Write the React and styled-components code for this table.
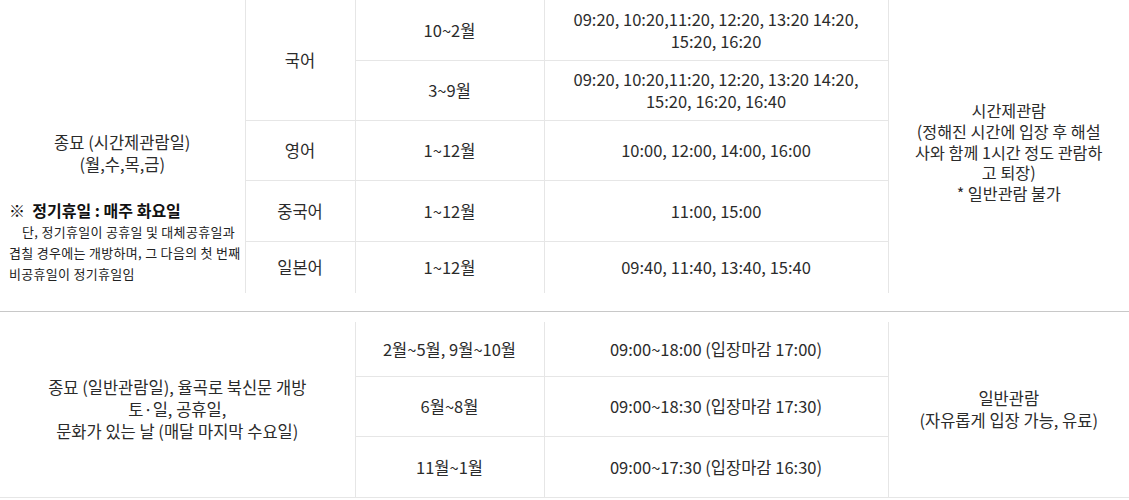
import React from 'react'
import styled, { createGlobalStyle } from 'styled-components'

const LINE = '#e6e6e6'
const TEXT = '#2b2b2b'

const GlobalStyle = createGlobalStyle`
  body {
    margin: 0;
    background: #fff;
    font-family: "Noto Sans CJK KR", "Noto Sans", sans-serif;
    color: ${TEXT};
  }
`

const Page = styled.div`
  width: 1129px;
`

const Table = styled.table`
  width: 100%;
  table-layout: fixed;
  border-collapse: collapse;
  border-style: hidden;
  ${p => p.$bottom && `border-bottom: 1px solid ${LINE};`}
`

const Row = styled.tr`
  height: ${p => p.$h}px;
`

const Cell = styled.td`
  border: 1px solid ${LINE};
  padding: 0 8px;
  text-align: center;
  vertical-align: ${p => p.$align || 'middle'};
  font-size: 16.5px;
  line-height: 22px;
  color: ${TEXT};
  white-space: nowrap;
`

const InfoCell = styled(Cell)`
  padding-top: 11px;
  font-size: 16.2px;
  line-height: 20.8px;
`

const ClosedCell = styled(Cell)`
  padding: 0 9px 9px;
`

const Divider = styled.hr`
  height: 0;
  margin: 18px 0 10px;
  border: 0;
  border-top: 1px solid #c8c8c8;
`

const Note = styled.div`
  margin-top: 24px;
  text-align: left;
`

const NoteTitle = styled.p`
  margin: 0;
  font-size: 16px;
  line-height: 22px;
  font-weight: 700;
  color: #111;
  white-space: pre;
`

const NoteText = styled.p`
  margin: 0;
  font-size: 13px;
  line-height: 21px;
  letter-spacing: 0.3px;
  color: #222;
  text-indent: 13px;
`

export default function App() {
  return (
    <Page>
      <GlobalStyle />
      <Table>
        <colgroup>
          <col style={{ width: 245 }} />
          <col style={{ width: 110 }} />
          <col style={{ width: 189 }} />
          <col style={{ width: 344 }} />
          <col />
        </colgroup>
        <tbody>
          <Row $h={60}>
            <ClosedCell rowSpan={5} $align="bottom">
              종묘 (시간제관람일)<br />
              (월,수,목,금)
              <Note>
                <NoteTitle>{'※  정기휴일 : 매주 화요일'}</NoteTitle>
                <NoteText>
                  단, 정기휴일이 공휴일 및 대체공휴일과<br />
                  겹칠 경우에는 개방하며, 그 다음의 첫 번째<br />
                  비공휴일이 정기휴일임
                </NoteText>
              </Note>
            </ClosedCell>
            <Cell rowSpan={2}>국어</Cell>
            <Cell>10~2월</Cell>
            <Cell>
              09:20, 10:20,11:20, 12:20, 13:20 14:20,<br />
              15:20, 16:20
            </Cell>
            <InfoCell rowSpan={5}>
              시간제관람<br />
              (정해진 시간에 입장 후 해설<br />
              사와 함께 1시간 정도 관람하<br />
              고 퇴장)<br />
              * 일반관람 불가
            </InfoCell>
          </Row>
          <Row $h={60}>
            <Cell>3~9월</Cell>
            <Cell>
              09:20, 10:20,11:20, 12:20, 13:20 14:20,<br />
              15:20, 16:20, 16:40
            </Cell>
          </Row>
          <Row $h={60}>
            <Cell>영어</Cell>
            <Cell>1~12월</Cell>
            <Cell>10:00, 12:00, 14:00, 16:00</Cell>
          </Row>
          <Row $h={61}>
            <Cell>중국어</Cell>
            <Cell>1~12월</Cell>
            <Cell>11:00, 15:00</Cell>
          </Row>
          <Row $h={52}>
            <Cell>일본어</Cell>
            <Cell>1~12월</Cell>
            <Cell>09:40, 11:40, 13:40, 15:40</Cell>
          </Row>
        </tbody>
      </Table>

      <Divider />

      <Table $bottom>
        <colgroup>
          <col style={{ width: 355 }} />
          <col style={{ width: 189 }} />
          <col style={{ width: 344 }} />
          <col />
        </colgroup>
        <tbody>
          <Row $h={54}>
            <Cell rowSpan={3}>
              종묘 (일반관람일), 율곡로 북신문 개방<br />
              토·일, 공휴일,<br />
              문화가 있는 날 (매달 마지막 수요일)
            </Cell>
            <Cell>2월~5월, 9월~10월</Cell>
            <Cell>09:00~18:00 (입장마감 17:00)</Cell>
            <Cell rowSpan={3}>
              일반관람<br />
              (자유롭게 입장 가능, 유료)
            </Cell>
          </Row>
          <Row $h={60}>
            <Cell>6월~8월</Cell>
            <Cell>09:00~18:30 (입장마감 17:30)</Cell>
          </Row>
          <Row $h={61}>
            <Cell>11월~1월</Cell>
            <Cell>09:00~17:30 (입장마감 16:30)</Cell>
          </Row>
        </tbody>
      </Table>
    </Page>
  )
}
